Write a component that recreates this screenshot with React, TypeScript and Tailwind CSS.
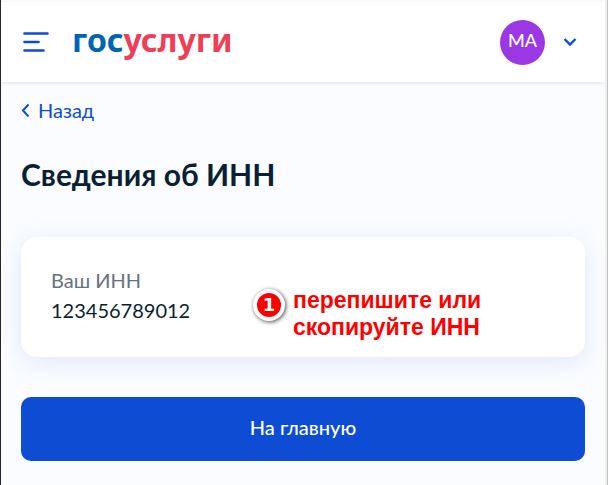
import React from 'react';

function MenuIcon() {
  return (
    <svg width="26" height="20" viewBox="0 0 26 20" fill="none" stroke="#0d4cd3" strokeWidth="2.6" strokeLinecap="round">
      <path d="M1.5 1.5H24.5M1.5 10H15.5M1.5 18.5H20.5" />
    </svg>
  );
}

function Header() {
  return (
    <header className="flex h-20 items-center bg-white pr-7 pl-[22px] shadow-[0_1px_3px_rgba(70,90,160,0.15)]">
      <button type="button" aria-label="Меню" className="mr-[23px] cursor-pointer">
        <MenuIcon />
      </button>
      <a href="#" className="pb-1 font-['Noto_Sans',sans-serif] text-[32px] leading-10 font-bold text-[#0065b1]">
        гос<span className="text-[#ee3f58]">услуги</span>
      </a>
      <div className="ml-auto flex size-[45px] items-center justify-center rounded-full bg-[#9b38e3] pb-1 text-lg font-medium text-white">
        МА
      </div>
      <button type="button" aria-label="Открыть профиль" className="ml-[18px] cursor-pointer">
        <svg width="14" height="10" viewBox="0 0 14 10" fill="none" stroke="#0d4cd3" strokeWidth="2.4">
          <path d="M1.5 2L7 7.5L12.5 2" />
        </svg>
      </button>
    </header>
  );
}

function Hint() {
  return (
    <div className="absolute top-[50px] left-[232px] flex items-start gap-2">
      <div className="mt-0.5 flex size-8 items-center justify-center rounded-full border-4 border-white bg-[#fe0000] font-['DejaVu_Sans',sans-serif] text-lg leading-none font-bold text-white shadow-[1px_1px_4px_rgba(0,0,0,0.7)]">
        1
      </div>
      <p className="font-['Liberation_Sans',sans-serif] text-[23px] leading-[27px] font-bold text-[#fe0000]">
        перепишите или
        <br />
        скопируйте ИНН
      </p>
    </div>
  );
}

export default function App() {
  return (
    <div className="flex min-h-screen border-l border-[#2b2528] bg-[#fafcff] font-['Lato',sans-serif] text-[#0b1f33]">
      <div className="min-w-0 flex-1 pt-0.5">
        <Header />
        <main className="px-5 pt-4">
          <a href="#" className="inline-flex items-center gap-2 text-xl leading-6 text-[#0d4cd3]">
            <svg width="9" height="14" viewBox="0 0 9 14" fill="none" stroke="#0d4cd3" strokeWidth="2">
              <path d="M7.5 1.5L2 7.5L7.5 13.5" />
            </svg>
            Назад
          </a>
          <h1 className="mt-[33px] text-3xl leading-9 font-bold">Сведения об ИНН</h1>
          <section className="relative mt-[45px] rounded-2xl bg-white px-[30px] pt-7 pb-8 shadow-[0_6px_24px_rgba(60,100,190,0.13)]">
            <dl className="text-xl leading-[30px]">
              <dt className="text-[#66727f]">Ваш ИНН</dt>
              <dd>123456789012</dd>
            </dl>
            <Hint />
          </section>
          <button type="button" className="mt-10 h-16 w-full cursor-pointer rounded-[10px] bg-[#0d4cd3] pb-1 text-xl font-medium text-white">
            На главную
          </button>
        </main>
      </div>
      <div className="w-[3px] border-r border-[#c1c1c1] bg-[#f0f0f0]" />
    </div>
  );
}
